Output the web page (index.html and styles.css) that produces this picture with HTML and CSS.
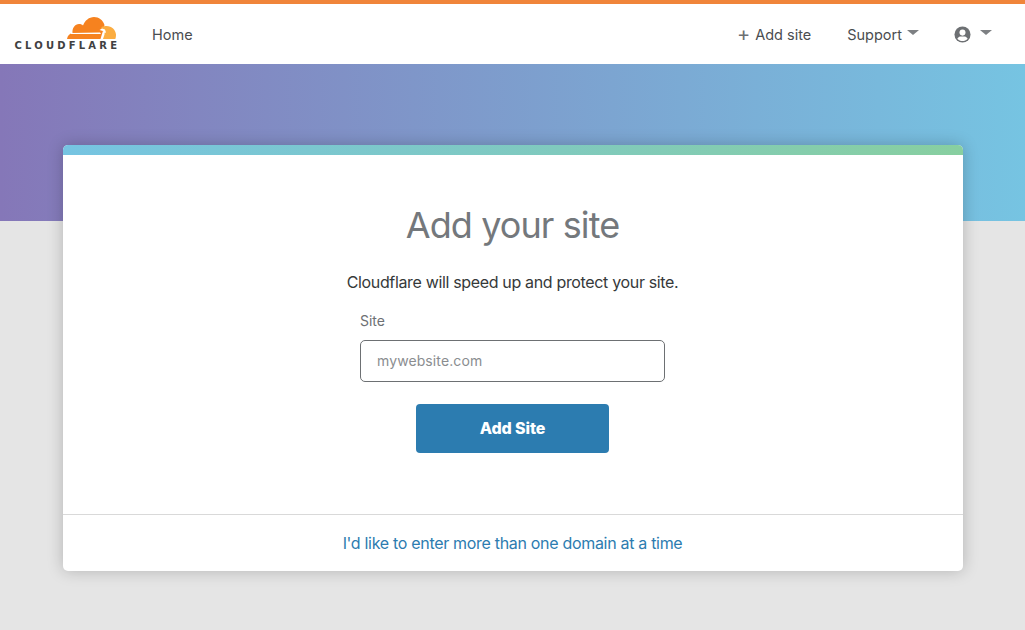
FILE: index.html
```html
<!DOCTYPE html>
<html lang="en">
<head>
    <meta charset="UTF-8">
    <meta name="viewport" content="width=device-width, initial-scale=1.0">
    <title>Add your site</title>
    <link rel="stylesheet" href="styles.css">
</head>
<body>
    <!-- Top navigation -->
    <header class="topbar">
        <div class="topbar-left">
            <a class="logo" href="#">
                <svg class="logo-cloud" width="51" height="24" viewBox="0 0 51 24">
                    <path fill="#f6821f" d="M1 23 C1.500 20 3.500 17.500 6.500 17 C6 12 9 8 13 8 C15 8 16 8.500 17 9.500 C19 4.500 23 1 28 1 C33 1 37 4 38.500 9 C38 12 37 15 36 18 L34.500 23 Z"/>
                    <path fill="#fbad41" d="M37 23 L38.500 18.500 C39 16.500 38 15 35.500 14.500 L35.500 11 C37 10 39 10 40.500 10 C46 10 49.500 14 50 18.500 C50 20 49.800 22 49.300 23 Z"/>
                    <path fill="#fff" d="M5 17 L33 16.500 C34.500 16.500 35 17 34.700 18 L5 18 Z"/>
                    <path fill="#fff" d="M36 12.500 L39 13.500 L40 16.500 L38.500 17 L37 15 L33.500 14 Z"/>
                </svg>
                <span class="logo-text">CLOUDFLARE</span>
            </a>
            <a class="nav-link" href="#">Home</a>
        </div>
        <nav class="topbar-right">
            <a class="nav-link add-link" href="#"><span class="plus">+</span> Add site</a>
            <a class="nav-link" href="#">Support <span class="caret"></span></a>
            <a class="nav-link user-link" href="#">
                <svg width="17" height="17" viewBox="0 0 18 18">
                    <circle cx="9" cy="9" r="8.500" fill="#6d7073"/>
                    <circle cx="9" cy="7" r="3.200" fill="#fff"/>
                    <path fill="#fff" d="M3.500 13.500 C4.500 11.500 6 11 7 11 L11 11 C12 11 13.500 11.500 14.500 13.500 C13 15.200 11 16 9 16 C7 16 5 15.200 3.500 13.500 Z"/>
                </svg>
                <span class="caret"></span>
            </a>
        </nav>
    </header>

    <div class="hero"></div>

    <!-- Add site card -->
    <main class="card">
        <div class="card-stripe"></div>
        <form class="card-body">
            <h1>Add your site</h1>
            <p class="lead">Cloudflare will speed up and protect your site.</p>
            <div class="field">
                <label for="site">Site</label>
                <input type="text" id="site" name="site" placeholder="mywebsite.com">
            </div>
            <button type="submit">Add Site</button>
        </form>
        <div class="card-footer">
            <a href="#">I'd like to enter more than one domain at a time</a>
        </div>
    </main>
</body>
</html>
```

FILE: styles.css
```css
body {
    font-family: Inter, Arial, sans-serif;
    margin: 0;
    padding: 0;
    height: 630px;
    overflow: hidden;
    background-color: #e5e5e5;
    color: #36393a;
}

a {
    text-decoration: none;
}

.topbar {
    display: flex;
    justify-content: space-between;
    align-items: center;
    box-sizing: border-box;
    height: 64px;
    padding: 0 33px 0 15px;
    background: #ffffff;
    border-top: 4px solid #f0853a;
}

.topbar-left,
.topbar-right {
    display: flex;
    align-items: center;
}

.topbar-left {
    gap: 35px;
}

.topbar-right {
    gap: 36px;
}

.nav-link {
    font-size: 14.500px;
    color: #4a4d50;
    display: flex;
    align-items: center;
    gap: 5px;
    white-space: nowrap;
}

.logo {
    display: flex;
    flex-direction: column;
    align-items: flex-end;
    width: 102px;
    margin-bottom: 2px;
}

.logo-cloud {
    display: block;
    margin-bottom: 1px;
}

.logo-text {
    font-family: "DejaVu Sans", Arial, sans-serif;
    font-size: 10px;
    font-weight: 700;
    line-height: 10px;
    letter-spacing: 3.200px;
    margin-right: -3.200px;
    color: #404041;
}

.plus {
    font-size: 20px;
    line-height: 16px;
    color: #6d7073;
}

.caret {
    width: 0;
    height: 0;
    margin-bottom: 3px;
    border-left: 6px solid transparent;
    border-right: 6px solid transparent;
    border-top: 5px solid #7d8083;
}

.user-link {
    gap: 9px;
    margin-left: -1px;
}

.hero {
    height: 157px;
    background: linear-gradient(90deg, #8577b8 0%, #76c4e2 100%);
}

.card {
    width: 900px;
    margin: -76px 0 0 63px;
    position: relative;
    background: #ffffff;
    border-radius: 5px;
    overflow: hidden;
    box-shadow: 0 0 16px rgba(0, 0, 0, 0.22);
}

.card-stripe {
    height: 10px;
    background: linear-gradient(90deg, #76c4e2 0%, #88cfa0 100%);
}

.card-body {
    display: flex;
    flex-direction: column;
    align-items: center;
    height: 360px;
    padding-right: 1px;
    box-sizing: border-box;
    border-bottom: 1px solid #d9d9d9;
}

h1 {
    margin: 48px 0 0;
    font-size: 36px;
    font-weight: 400;
    line-height: 44px;
    letter-spacing: -0.900px;
    color: #74787c;
}

.lead {
    margin: 23px 0 0;
    font-size: 16px;
    line-height: 24px;
    letter-spacing: -0.340px;
    color: #36393a;
}

.field {
    display: flex;
    flex-direction: column;
    width: 305px;
    margin-top: 17px;
}

.field label {
    font-size: 14px;
    line-height: 20px;
    color: #6d7073;
    margin-bottom: 9px;
}

.field input {
    box-sizing: border-box;
    height: 42px;
    padding: 0 16px 2px;
    font-family: inherit;
    font-size: 14px;
    letter-spacing: 0.100px;
    border: 1px solid #6d7073;
    border-radius: 5px;
    outline: none;
}

.field input::placeholder {
    color: #8a8d90;
    opacity: 1;
}

button {
    width: 193px;
    height: 49px;
    margin-top: 22px;
    padding: 0 0 2px;
    font-family: inherit;
    font-size: 16px;
    font-weight: 800;
    letter-spacing: -0.100px;
    color: #ffffff;
    background-color: #2c7cb0;
    border: none;
    border-radius: 4px;
    cursor: pointer;
}

.card-footer {
    height: 56px;
    padding-right: 1px;
    display: flex;
    justify-content: center;
    align-items: center;
}

.card-footer a {
    font-size: 16px;
    letter-spacing: -0.310px;
    color: #2c7cb0;
}
```
